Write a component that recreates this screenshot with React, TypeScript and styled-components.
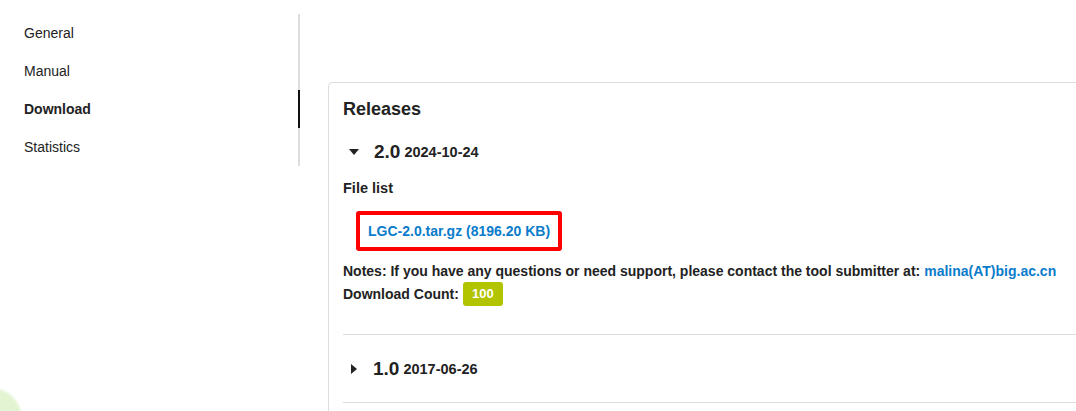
import React from "react";
import styled, { createGlobalStyle } from "styled-components";

const Global = createGlobalStyle`
  html, body { margin: 0; padding: 0; background: #fff; overflow: hidden; }
  body { font-family: "Liberation Sans", Arial, Helvetica, sans-serif; color: #333; }
  * { box-sizing: border-box; }
`;

const Page = styled.div`
  display: flex;
  align-items: flex-start;
  width: 1076px;
  height: 411px;
  overflow: hidden;
`;

const Sidebar = styled.nav`
  width: 300px;
  flex: none;
  padding-top: 14px;
`;

const NavList = styled.ul`
  list-style: none;
  margin: 0;
  padding: 0;
  border-right: 2px solid #ddd;
`;

const NavItem = styled.li<{ $active?: boolean }>`
  height: 38px;
  display: flex;
  align-items: center;
  padding-left: 24px;
  font-size: 14px;
  color: #222;
  font-weight: ${(p) => (p.$active ? 700 : 400)};
  margin-right: -2px;
  border-right: 2px solid ${(p) => (p.$active ? "#111" : "transparent")};
`;

const Main = styled.main`
  flex: 1;
  padding: 82px 0 0 28px;
  min-width: 0;
`;

const Card = styled.section`
  border: 1px solid #ddd;
  border-radius: 4px;
  margin-right: -30px;
  padding: 15px 14px 0 14px;
`;

const Title = styled.h2`
  margin: 0;
  font-size: 18px;
  line-height: 22px;
  font-weight: 700;
  color: #222;
`;

const Release = styled.div<{ $first?: boolean; $empty?: boolean }>`
  border-top: ${(p) => (p.$first ? "none" : "1px solid #ddd")};
  min-height: ${(p) => (p.$empty ? "40px" : "0")};
`;

const ReleaseHead = styled.div<{ $first?: boolean }>`
  display: flex;
  align-items: center;
  height: ${(p) => (p.$first ? "50px" : "67px")};
  padding-top: ${(p) => (p.$first ? "14px" : "0")};
  padding-left: 6px;
  color: #222;
`;

const Caret = styled.span<{ $open?: boolean }>`
  width: 0;
  height: 0;
  display: inline-block;
  ${(p) =>
    p.$open
      ? `border-left: 5px solid transparent; border-right: 5px solid transparent; border-top: 6px solid #222; margin: 0 15px 0 0;`
      : `border-top: 5px solid transparent; border-bottom: 5px solid transparent; border-left: 6px solid #222; margin: 0 16px 0 2px;`}
`;

const Version = styled.span`
  font-size: 19px;
  font-weight: 700;
`;

const DateText = styled.span`
  font-size: 14.5px;
  font-weight: 700;
  margin-left: 4px;
`;

const Body = styled.div`
  padding-bottom: 28px;
`;

const Label = styled.div`
  font-size: 14.5px;
  font-weight: 700;
  color: #222;
  line-height: 18px;
  margin-top: 9px;
`;

const FileBox = styled.div`
  display: inline-flex;
  align-items: center;
  margin: 14px 0 0 13px;
  height: 40px;
  padding: 0 8px 0 8px;
  border: 4px solid #ff0000;
  border-radius: 3px;
`;

const Link = styled.a`
  color: #0a7ccb;
  font-weight: 700;
  font-size: 14px;
  text-decoration: none;
`;

const Line = styled.div`
  font-size: 14px;
  font-weight: 700;
  color: #222;
  line-height: 22px;
  display: flex;
  align-items: center;
  white-space: nowrap;
`;

const Notes = styled(Line)`
  margin-top: 9px;
  gap: 4px;
`;

const Badge = styled.span`
  display: inline-flex;
  align-items: center;
  justify-content: center;
  background: #b2c300;
  color: #fff;
  font-size: 13px;
  font-weight: 700;
  height: 24px;
  width: 40px;
  border-radius: 3px;
  margin-left: 4px;
`;

const Blob = styled.div`
  position: fixed;
  left: -40px;
  top: 388px;
  width: 62px;
  height: 62px;
  border-radius: 50%;
  background: #e3f4d2;
  filter: blur(1px);
`;

export default function App() {
  return (
    <>
      <Global />
      <Page>
        <Sidebar>
          <NavList>
            <NavItem>General</NavItem>
            <NavItem>Manual</NavItem>
            <NavItem $active>Download</NavItem>
            <NavItem>Statistics</NavItem>
          </NavList>
        </Sidebar>
        <Main>
          <Card>
            <Title>Releases</Title>
            <Release $first>
              <ReleaseHead $first>
                <Caret $open />
                <Version>2.0</Version>
                <DateText>2024-10-24</DateText>
              </ReleaseHead>
              <Body>
                <Label>File list</Label>
                <FileBox>
                  <Link href="#">LGC-2.0.tar.gz (8196.20 KB)</Link>
                </FileBox>
                <Notes>
                  Notes: If you have any questions or need support, please contact the tool submitter at:
                  <Link href="#">malina(AT)big.ac.cn</Link>
                </Notes>
                <Line>
                  Download Count: <Badge>100</Badge>
                </Line>
              </Body>
            </Release>
            <Release>
              <ReleaseHead>
                <Caret />
                <Version>1.0</Version>
                <DateText>2017-06-26</DateText>
              </ReleaseHead>
            </Release>
            <Release $empty />
          </Card>
        </Main>
      </Page>
      <Blob />
    </>
  );
}
